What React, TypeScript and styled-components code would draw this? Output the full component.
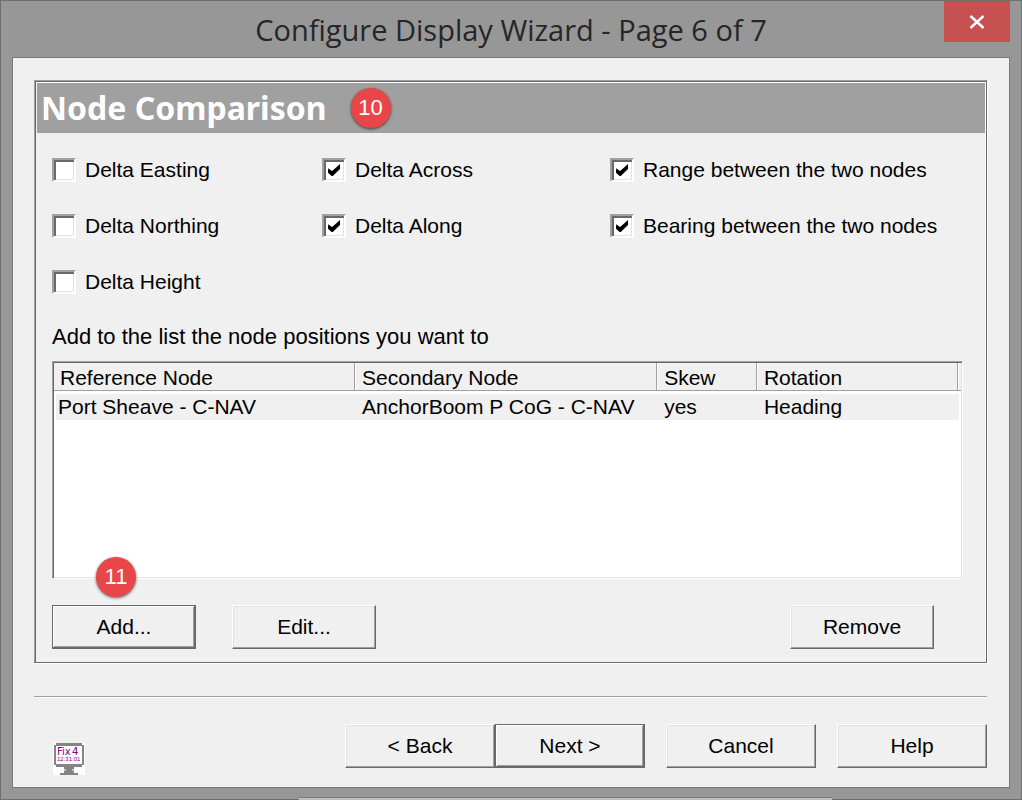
import React from "react";
import styled, { createGlobalStyle, css } from "styled-components";

const color = {
  frame: "#979797",
  face: "#f0f0f0",
  light: "#ffffff",
  softLight: "#e3e3e3",
  shadow: "#a0a0a0",
  dark: "#696969",
};

const GlobalStyle = createGlobalStyle`
  *, *::before, *::after { box-sizing: border-box; }
  body {
    margin: 0;
    background: ${color.frame};
    color: #000;
    font-family: "Liberation Sans", Arial, sans-serif;
    font-size: 21px;
    line-height: 28px;
  }
`;

const Window = styled.div`
  position: relative;
  display: flex;
  flex-direction: column;
  min-height: 100vh;
  padding: 0 11px 11px;
  border: 1px solid #6e6e6e;
  background: ${color.frame};
`;

const TitleBar = styled.header`
  display: grid;
  grid-template-columns: 66px 1fr 66px;
  align-items: start;
  height: 56px;
`;

const WindowTitle = styled.h1`
  grid-column: 2;
  margin: 0;
  padding-top: 9px;
  color: #262626;
  font: 400 29px/40px "Open Sans", "Noto Sans", sans-serif;
  text-align: center;
  white-space: nowrap;
`;

const CloseButton = styled.button`
  display: flex;
  align-items: center;
  justify-content: center;
  height: 41px;
  padding: 0;
  border: 0;
  background: #c75050;
`;

const Client = styled.main`
  display: flex;
  flex: 1;
  flex-direction: column;
  padding: 22px 22px 12px 21px;
  border: 1px solid #787878;
  background: ${color.face};
`;

const Panel = styled.section`
  display: flex;
  flex: 1;
  flex-direction: column;
  border: 1px solid ${color.dark};
  border-top-color: ${color.shadow};
  border-left-color: ${color.shadow};
  box-shadow: inset 1px 1px ${color.dark}, inset -1px 2px ${color.light}, 1px 1px ${color.light};
  padding: 2px 1px 0 2px;
`;

const PanelHeader = styled.div`
  display: flex;
  align-items: center;
  gap: 24px;
  height: 50px;
  padding-left: 4px;
  background: ${color.shadow};
`;

const PanelTitle = styled.h2`
  margin: 0;
  color: #fff;
  font: 700 32px/40px "Noto Sans", "Open Sans", sans-serif;
`;

const Badge = styled.span`
  display: flex;
  align-items: center;
  justify-content: center;
  width: 40px;
  height: 40px;
  border-radius: 50%;
  background: #e84648;
  box-shadow: 0 1px 3px rgba(0, 0, 0, 0.6);
  color: #fff;
  font-size: 22px;
`;

const FloatingBadge = styled(Badge)`
  position: absolute;
  left: 44px;
  bottom: 52px;
`;

const PanelBody = styled.div`
  display: flex;
  flex: 1;
  flex-direction: column;
  padding: 25px 22px 13px 15px;
`;

const CheckGrid = styled.div`
  display: grid;
  grid-template-columns: 270fr 288fr 353fr;
  grid-auto-rows: 24px;
  row-gap: 32px;
`;

const CheckLabel = styled.label<{ $column: number }>`
  grid-column: ${(p) => p.$column};
  display: flex;
  align-items: center;
  gap: 9px;
  white-space: nowrap;
`;

const CheckBox = styled.input`
  appearance: none;
  display: flex;
  align-items: center;
  justify-content: center;
  width: 24px;
  height: 24px;
  margin: 0;
  border: 2px solid ${color.light};
  border-top-color: ${color.shadow};
  border-left-color: ${color.shadow};
  background: #fff;
  box-shadow: inset 2px 2px ${color.dark}, inset -1px -1px ${color.softLight};

  &:checked::before {
    content: "";
    width: 12px;
    height: 12px;
    background: #000;
    clip-path: polygon(0 35%, 34% 58%, 100% 0, 100% 42%, 40% 100%, 30% 100%, 0 72%);
  }
`;

const Hint = styled.p`
  margin: 29px 0 10px;
  font-size: 22px;
`;

const ListBox = styled.div`
  flex: 1;
  min-height: 218px;
  border: 1px solid ${color.light};
  border-top-color: ${color.shadow};
  border-left-color: ${color.shadow};
  background: #fff;
  box-shadow: inset 1px 1px ${color.dark}, inset -1px -1px ${color.softLight};
  padding: 1px;
`;

const Table = styled.table`
  width: 100%;
  table-layout: fixed;
  border-spacing: 0;
  text-align: left;
`;

const Column = styled.col<{ $share?: string }>`
  width: ${(p) => p.$share ?? "auto"};
`;

const HeadCell = styled.th`
  height: 28px;
  padding: 2px 0 0 7px;
  border-right: 1px solid ${color.shadow};
  border-bottom: 1px solid ${color.shadow};
  background: ${color.face};
  box-shadow: inset 1px 0 ${color.light};
  font-weight: 400;
  line-height: 25px;

  &:first-child {
    padding-left: 6px;
    box-shadow: none;
  }
  &:last-child {
    padding: 0;
    border-right: 0;
  }
`;

const Cell = styled.td`
  height: 29px;
  padding: 0 0 0 7px;
  border-top: 3px solid #fff;
  background: ${color.face};
  line-height: 26px;

  &:first-child {
    padding-left: 2px;
    border-left: 2px solid #fff;
  }
  &:last-child {
    padding: 0;
    border-right: 2px solid #fff;
  }
`;

const ListActions = styled.div`
  position: relative;
  display: flex;
  gap: 36px;
  margin: 26px 29px 0 0;
`;

const PushButton = styled.button<{ $width: number; $default?: boolean; $pushRight?: boolean }>`
  width: ${(p) => p.$width}px;
  height: 44px;
  padding: 0;
  background: ${color.face};
  color: #000;
  font: inherit;
  ${(p) => p.$pushRight && "margin-left: auto;"}
  ${(p) =>
    p.$default
      ? css`
          border: 1px solid ${color.dark};
          box-shadow: inset -1px -1px ${color.dark}, inset 1px 1px ${color.light},
            inset -2px -2px ${color.shadow};
        `
      : css`
          border: 1px solid ${color.dark};
          border-top-color: ${color.light};
          border-left-color: ${color.light};
          box-shadow: inset -1px -1px ${color.shadow}, inset 1px 1px ${color.softLight};
        `}
`;

const Divider = styled.hr`
  width: 100%;
  margin: 33px 0 26px;
  border: 0;
  border-top: 1px solid ${color.shadow};
  border-bottom: 1px solid ${color.light};
`;

const Footer = styled.footer`
  display: flex;
  justify-content: space-between;
  padding-left: 19px;
`;

const Logo = styled.svg`
  width: 32px;
  height: 32px;
  margin-top: 19px;
`;

const WizardActions = styled.div`
  display: flex;
  gap: 21px;
`;

const StepButtons = styled.div`
  display: flex;
`;

const BackgroundWindow = styled.div`
  position: absolute;
  left: 298px;
  bottom: -1px;
  width: 533px;
  height: 3px;
  border-top: 1px solid #7c7c7c;
  background: #bdbdbd;
`;

const options = [
  { label: "Delta Easting", column: 1, checked: false },
  { label: "Delta Across", column: 2, checked: true },
  { label: "Range between the two nodes", column: 3, checked: true },
  { label: "Delta Northing", column: 1, checked: false },
  { label: "Delta Along", column: 2, checked: true },
  { label: "Bearing between the two nodes", column: 3, checked: true },
  { label: "Delta Height", column: 1, checked: false },
];

const rows = [["Port Sheave - C-NAV", "AnchorBoom P CoG - C-NAV", "yes", "Heading"]];

export default function App() {
  return (
    <>
      <GlobalStyle />
      <Window>
        <TitleBar>
          <WindowTitle>Configure Display Wizard - Page 6 of 7</WindowTitle>
          <CloseButton type="button" aria-label="Close">
            <svg width="16" height="14" viewBox="0 0 16 14">
              <path d="M1.5 1 14.5 13M14.5 1 1.5 13" stroke="#fff" strokeWidth="2.4" />
            </svg>
          </CloseButton>
        </TitleBar>
        <Client>
          <Panel>
            <PanelHeader>
              <PanelTitle>Node Comparison</PanelTitle>
              <Badge>10</Badge>
            </PanelHeader>
            <PanelBody>
              <CheckGrid>
                {options.map((o) => (
                  <CheckLabel key={o.label} $column={o.column}>
                    <CheckBox type="checkbox" defaultChecked={o.checked} />
                    {o.label}
                  </CheckLabel>
                ))}
              </CheckGrid>
              <Hint>Add to the list the node positions you want to</Hint>
              <ListBox>
                <Table>
                  <colgroup>
                    <Column $share="33.2%" />
                    <Column $share="33.3%" />
                    <Column $share="11%" />
                    <Column $share="22.2%" />
                    <Column />
                  </colgroup>
                  <thead>
                    <tr>
                      <HeadCell>Reference Node</HeadCell>
                      <HeadCell>Secondary Node</HeadCell>
                      <HeadCell>Skew</HeadCell>
                      <HeadCell>Rotation</HeadCell>
                      <HeadCell as="td" />
                    </tr>
                  </thead>
                  <tbody>
                    {rows.map((row) => (
                      <tr key={row[0]}>
                        {row.map((value) => (
                          <Cell key={value}>{value}</Cell>
                        ))}
                        <Cell />
                      </tr>
                    ))}
                  </tbody>
                </Table>
              </ListBox>
              <ListActions>
                <PushButton type="button" $width={144} $default>
                  Add...
                </PushButton>
                <PushButton type="button" $width={144}>
                  Edit...
                </PushButton>
                <PushButton type="button" $width={144} $pushRight>
                  Remove
                </PushButton>
                <FloatingBadge>11</FloatingBadge>
              </ListActions>
            </PanelBody>
          </Panel>
          <Divider />
          <Footer>
            <Logo viewBox="0 0 32 32" role="img" aria-label="Fix display">
              <rect width="32" height="32" fill="#fff" />
              <path
                fill="#848484"
                fillRule="evenodd"
                d="M3 0H29V2H31V22H29V24H21V26H19V28H21V30H25V32H7V30H11V28H13V26H11V24H3V22H1V2H3ZM3 3V21H29V3Z"
              />
              <path fill="#848484" d="M13 26H19V30H13Z" />
              <path fill="#c4c4c4" d="M11 26H13V28H11ZM19 26H21V28H19Z" />
              <g fill="#800080" fontFamily="DejaVu Sans" fontSize="10">
                <text x="4" y="12">Fix</text>
                <text x="19" y="12">4</text>
              </g>
              <text x="4" y="18" fontSize="6" fontFamily="Liberation Sans" fill="#800080">
                12:31:01
              </text>
            </Logo>
            <WizardActions>
              <StepButtons>
                <PushButton type="button" $width={150}>
                  &lt; Back
                </PushButton>
                <PushButton type="button" $width={150} $default>
                  Next &gt;
                </PushButton>
              </StepButtons>
              <PushButton type="button" $width={150}>
                Cancel
              </PushButton>
              <PushButton type="button" $width={150}>
                Help
              </PushButton>
            </WizardActions>
          </Footer>
        </Client>
        <BackgroundWindow />
      </Window>
    </>
  );
}
